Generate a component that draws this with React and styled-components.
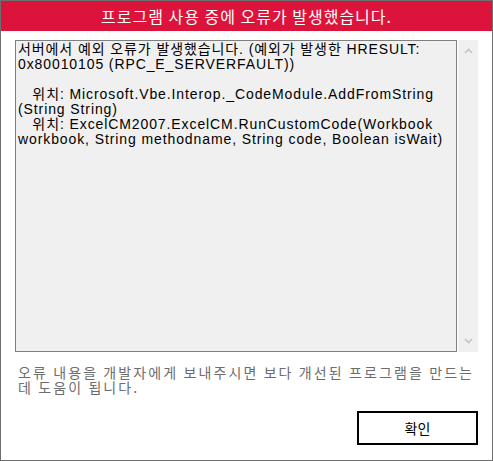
import React from 'react';
import styled, { createGlobalStyle } from 'styled-components';

const GlobalStyle = createGlobalStyle`
  html, body {
    margin: 0;
    padding: 0;
    background: #ffffff;
  }
  body {
    font-family: "Liberation Sans", "Noto Sans CJK KR", sans-serif;
  }
`;

const Window = styled.div`
  width: 493px;
  height: 461px;
  box-sizing: border-box;
  border: 1px solid #6e6e6e;
  background: #ffffff;
  display: flex;
  flex-direction: column;
`;

const TitleBar = styled.div`
  height: 30px;
  background: #dc143c;
  color: #ffffff;
  display: flex;
  align-items: center;
  justify-content: center;
  font-family: "Noto Sans CJK KR", sans-serif;
  font-size: 16px;
  letter-spacing: 1px;
`;

const Body = styled.div`
  flex: 1;
  display: flex;
  flex-direction: column;
  padding: 9px 14px 15px 14px;
`;

const MessageArea = styled.div`
  display: flex;
  height: 312px;
  gap: 1px;
`;

const TextBox = styled.div`
  flex: 1;
  box-sizing: border-box;
  border: 1px solid #7f7f7f;
  background: #f0f0f0;
  padding: 1px 2px;
  color: #000000;
  font-family: "Liberation Sans", "Noto Sans CJK KR", sans-serif;
  font-size: 14px;
  line-height: 15px;
  letter-spacing: 0.9px;
  white-space: pre;
  overflow: hidden;
`;

const ScrollBar = styled.div`
  width: 20px;
  background: #f0f0f0;
  display: flex;
  flex-direction: column;
  justify-content: space-between;
  align-items: center;
  padding: 8px 0;
  box-sizing: border-box;
`;

const Arrow = styled.svg`
  width: 9px;
  height: 6px;
  display: block;
`;

const Hint = styled.p`
  margin: 13px 0 0 3px;
  color: #6d6d6d;
  font-family: "Noto Sans CJK KR", sans-serif;
  font-size: 14px;
  line-height: 15px;
  letter-spacing: 2.1px;
  white-space: nowrap;
`;

const Footer = styled.div`
  margin-top: auto;
  display: flex;
  justify-content: flex-end;
`;

const OkButton = styled.button`
  width: 121px;
  height: 34px;
  box-sizing: border-box;
  border: 2px solid #000000;
  background: #ffffff;
  color: #000000;
  font-family: "Noto Sans CJK KR", sans-serif;
  font-size: 14px;
  padding: 0;
  cursor: pointer;
`;

const ChevronUp = () => (
  <Arrow viewBox="0 0 9 6">
    <path d="M1 5 L4.5 1.5 L8 5" fill="none" stroke="#c4c4c4" strokeWidth="1.6" />
  </Arrow>
);

const ChevronDown = () => (
  <Arrow viewBox="0 0 9 6">
    <path d="M1 1 L4.5 4.5 L8 1" fill="none" stroke="#c4c4c4" strokeWidth="1.6" />
  </Arrow>
);

const message = [
  '서버에서 예외 오류가 발생했습니다. (예외가 발생한 HRESULT:',
  '0x80010105 (RPC_E_SERVERFAULT))',
  '',
  '   위치: Microsoft.Vbe.Interop._CodeModule.AddFromString',
  '(String String)',
  '   위치: ExcelCM2007.ExcelCM.RunCustomCode(Workbook',
  'workbook, String methodname, String code, Boolean isWait)',
].join('\n');

const App = () => {
  return (
    <>
      <GlobalStyle />
      <Window>
        <TitleBar>프로그램 사용 중에 오류가 발생했습니다.</TitleBar>
        <Body>
          <MessageArea>
            <TextBox>{message}</TextBox>
            <ScrollBar>
              <ChevronUp />
              <ChevronDown />
            </ScrollBar>
          </MessageArea>
          <Hint>
            오류 내용을 개발자에게 보내주시면 보다 개선된 프로그램을 만드는
            <br />
            데 도움이 됩니다.
          </Hint>
          <Footer>
            <OkButton>확인</OkButton>
          </Footer>
        </Body>
      </Window>
    </>
  );
};

export default App;
